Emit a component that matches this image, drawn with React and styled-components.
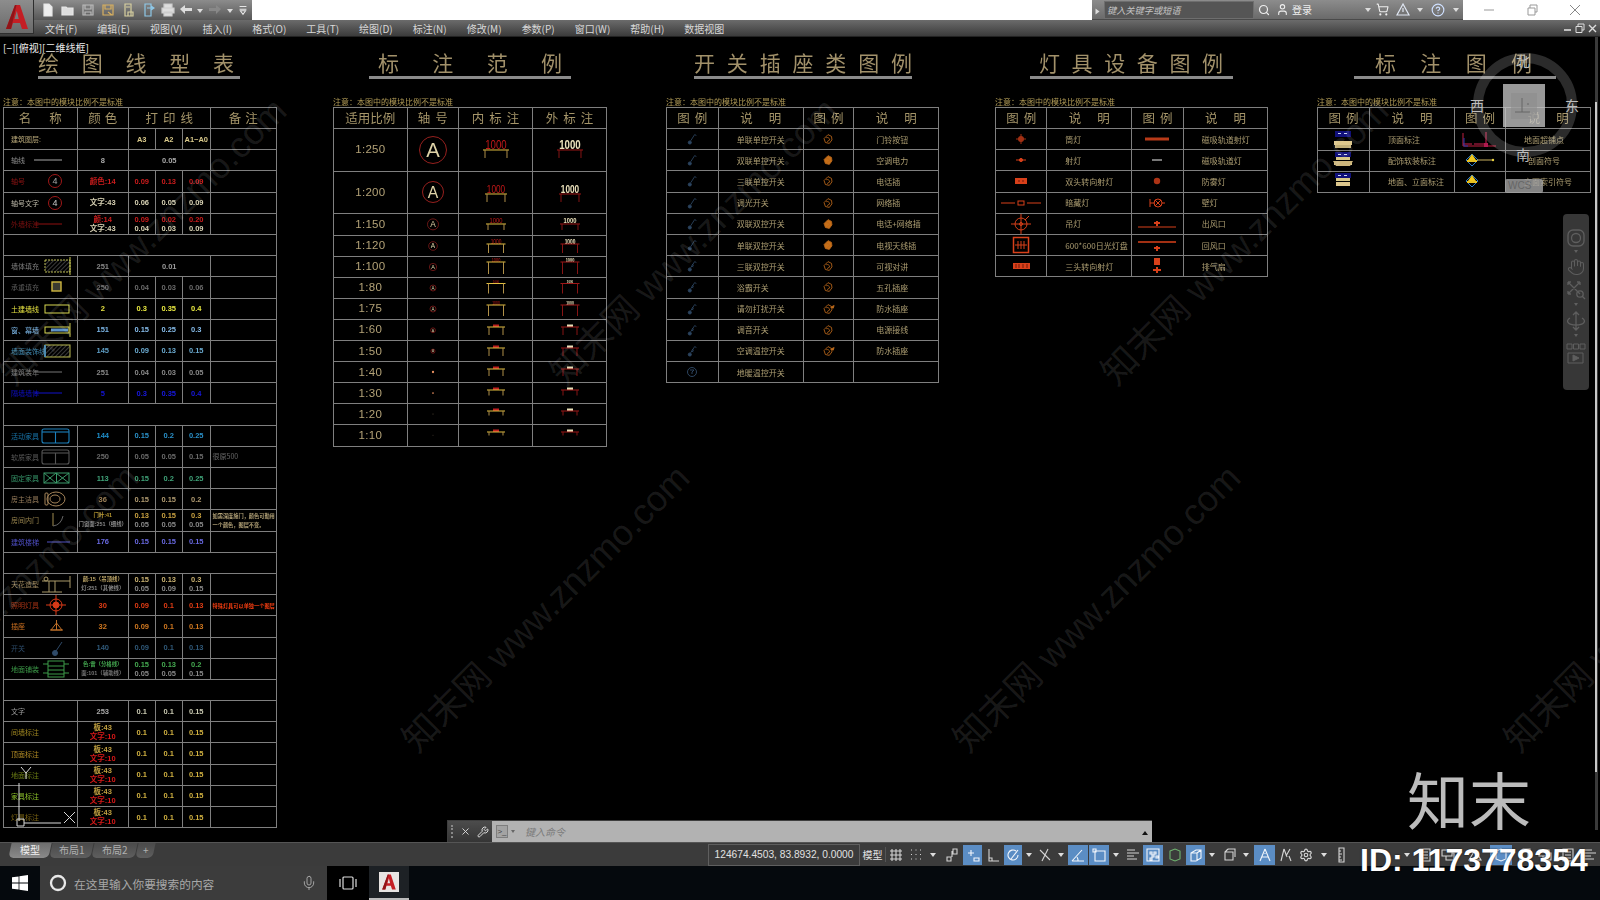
import React from "react";
import styled, { createGlobalStyle } from "styled-components";
import { Hand, Search, Mic, ShoppingCart, HelpCircle, User, Wrench, X as XIcon, Settings } from "lucide-react";

const CJK = '"Noto Sans CJK SC", "Liberation Sans", sans-serif';
const LAT = '"Liberation Sans", "Noto Sans CJK SC", sans-serif';
const TAN = "#b3a277";
const LINE = "#7f7f7f";

const Global = createGlobalStyle`
  html, body { margin: 0; padding: 0; width: 1600px; height: 900px; overflow: hidden; background: #000; }
  #root { width: 1600px; height: 900px; }
  * { box-sizing: border-box; }
`;

const Frame = styled.div`display: flex; flex-direction: column; width: 1600px; height: 900px; font-family: ${CJK}; position: relative;`;

/* ---------- title bar ---------- */
const TitleBar = styled.div`display: flex; height: 20px; background: #fff; flex: none;`;
const AppButton = styled.div`
  position: absolute; left: 0; top: 0; width: 34px; height: 34px; z-index: 5;
  background: linear-gradient(#8d8d8d, #6a6a6a); border-right: 1px solid #2e2e2e; border-bottom: 1px solid #2e2e2e;
  display: flex; align-items: center; justify-content: center;
`;
const Qat = styled.div`
  width: 252px; height: 20px; padding-left: 38px; display: flex; align-items: center;
  background: linear-gradient(#8c8c8c, #565656);
`;
const QatSlot = styled.div`width: ${p => p.$w || 20}px; height: 20px; display: flex; align-items: center; justify-content: center; flex: none;`;
const TitleSpacer = styled.div`flex: 1; background: #fff;`;
const InfoCenter = styled.div`
  width: 371px; height: 20px; display: flex; align-items: center; padding-left: 4px; color: #eee; font-size: 10px;
  background: linear-gradient(#8c8c8c, #6a6a6a); border-bottom: 1px solid #4a4a4a; flex: none;
`;
const SearchField = styled.div`
  width: 150px; height: 18px; margin-left: 2px; background: #555; border: 1px solid #6e6e6e; color: #c4c4c4; flex: none;
  font-size: 9.2px; font-style: italic; line-height: 16px; padding-left: 2px;
`;
const InfoSlot = styled.div`width: ${p => p.$w}px; flex: none; display: flex; align-items: center; justify-content: center; color: #eee;`;
const LoginText = styled.span`white-space: nowrap; flex: none;`;
const WindowButtons = styled.div`width: 137px; flex: none; display: flex; align-items: center; justify-content: space-around; padding: 0 4px; background: #fff;`;

/* ---------- menu ---------- */
const MenuBar = styled.div`
  height: 17px; flex: none; display: flex; align-items: center; gap: 20px; padding-left: 45px;
  background: linear-gradient(#6b6b6b, #3b3b3b); border-bottom: 1px solid #222; position: relative;
`;
const MenuItem = styled.span`font-size: 10px; color: #d8d8d8; white-space: nowrap;`;
const DocButtons = styled.div`margin-left: auto; display: flex; gap: 3px; padding-right: 3px; align-items: center;`;

/* ---------- canvas ---------- */
const Canvas = styled.div`flex: 1; position: relative; overflow: hidden; background: #000;`;
const Sheet = styled.div`
  display: grid; grid-template-columns: 330px 333px 329px 322px 283px; padding-left: 3px; filter: blur(0.42px);
`;
const Column = styled.div`display: flex; flex-direction: column; align-items: flex-start;`;
const Heading = styled.div`
  margin-left: ${p => p.$x}px; width: ${p => p.$w}px; margin-top: 14px; height: 25px; line-height: 22px;
  padding: 0 ${p => p.$pr}px 0 ${p => p.$pl}px; display: flex; justify-content: space-between;
  font-size: 21px; color: #a2916a;
`;
const Rule = styled.div`margin-left: ${p => p.$x}px; width: ${p => p.$w}px; height: 3px; background: #8b8b8b;`;
const Note = styled.div`margin-top: 17px; height: 11px; line-height: 11px; font-size: 8px; color: #b19b56; white-space: nowrap;`;
const Table = styled.div`
  display: grid; grid-template-columns: ${p => p.$cols}; grid-template-rows: ${p => p.$rows};
  border-top: 1px solid ${LINE}; border-left: 1px solid ${LINE};
`;
const Cell = styled.div`
  grid-column: span ${p => p.$span || 1}; border-right: 1px solid ${LINE}; border-bottom: 1px solid ${LINE};
  display: flex; flex-direction: column; align-items: center; justify-content: center; min-width: 0;
  color: ${p => p.$c || TAN}; font-size: ${p => p.$tight ? 5.4 : 7.5}px; line-height: 9px; font-family: ${LAT}; font-weight: ${p => p.$b ? 700 : 400}; white-space: nowrap;
`;
const HeadCell = styled(Cell)`
  font-size: 12.5px; font-weight: 400; color: #a59569; font-family: ${CJK}; letter-spacing: ${p => p.$ls || 0}px; padding-left: ${p => p.$ls || 0}px; line-height: 20px;
`;
const NameCell = styled.div`
  display: grid; grid-template-columns: 21px 42px; align-items: center; padding-left: 7px;
  border-right: 1px solid ${LINE}; border-bottom: 1px solid ${LINE}; overflow: visible;
`;
const NameLabel = styled.span`font-size: 7px; color: ${p => p.$c}; white-space: nowrap;`;
const Remark = styled(Cell)`align-items: flex-start; padding-left: 2px; font-size: ${p => p.$long ? 5.2 : 7}px; font-family: ${CJK}; line-height: 9px;`;
const ScaleCell = styled(Cell)`font-size: 11.5px; color: ${TAN}; letter-spacing: .3px;`;
const LegendLabel = styled(Cell)`align-items: flex-start; padding-left: ${p => p.$pad || 18}px; font-size: 8px; font-family: ${CJK}; color: #ad9e72;`;
const BlankCell = styled(Cell)`grid-column: 1 / -1;`;

/* ---------- overlays on the drawing ---------- */
const Watermark = styled.div`
  position: absolute; left: ${p => p.$x}px; top: ${p => p.$y}px; transform: rotate(-45deg); transform-origin: 0 100%;
  font-size: 36px; line-height: 40px; white-space: nowrap; color: rgba(255,255,255,.1); font-family: ${LAT}; pointer-events: none;
`;
const ViewLabel = styled.div`position: absolute; left: 3px; top: 5px; color: #eee; font-size: 10px; line-height: 12px;`;
const Ucs = styled.svg`position: absolute; left: 15px; top: 728px;`;
const CubeRing = styled.div`
  position: absolute; left: 1473px; top: 16px; width: 104px; height: 104px; border-radius: 50%;
  border: 10px solid rgba(255,255,255,.17);
`;
const CubeFace = styled.div`
  position: absolute; left: 1503px; top: 47px; width: 42px; height: 43px; background: rgba(195,195,195,.78);
  display: flex; align-items: center; justify-content: center;
`;
const CubeInner = styled.div`width: 26px; height: 26px; background: rgba(140,140,140,.55); display: flex; align-items: center; justify-content: center;`;
const Compass = styled.div`position: absolute; left: ${p => p.$x}px; top: ${p => p.$y}px; color: #bdbdbd; font-size: 14px; line-height: 16px;`;
const WcsTag = styled.div`
  position: absolute; left: 1505px; top: 142px; width: 38px; height: 14px; background: rgba(165,165,165,.8); border-radius: 2px;
  color: #666; font: 10px/14px ${LAT}; padding-left: 3px;
`;
const NavBar = styled.div`
  position: absolute; left: 1563px; top: 177px; width: 26px; height: 176px; background: #373737; border-radius: 4px;
  display: flex; flex-direction: column; align-items: center; gap: 4px; padding-top: 15px; color: #5e5e5e;
`;
const NavCaret = styled.div`width: 0; height: 0; border: 2.5px solid transparent; border-top: 3px solid #606060; margin: -1px 0;`;
const Scrollbar = styled.div`position: absolute; right: 2px; top: 0; bottom: 12px; width: 3px; background: #3a3a3a; `;
const ScrollThumb = styled.div`margin-top: 65px; height: 670px; background: #c8c8c8; width: 2px;`;
const Brand = styled.div`position: absolute; left: 1407px; top: 723px; color: #bcbcbc; font-size: 62px; line-height: 76px; white-space: nowrap;`;
const CommandLine = styled.div`
  position: absolute; left: 447px; top: 783px; width: 705px; height: 22px; display: flex; border: 1px solid #3e3e3e; border-bottom: 0; border-right: 0;
`;
const CmdTools = styled.div`width: 44px; background: linear-gradient(#4c4c4c, #353535); display: flex; align-items: center; gap: 6px; padding-left: 3px; color: #ddd; flex: none;`;
const Grip = styled.div`width: 3px; height: 13px; border-left: 2px dotted #888;`;
const CmdInput = styled.div`
  flex: 1; background: #b2b2b2; display: flex; align-items: center; padding: 0 4px 0 4px; color: #7a7a7a; font-size: 10px; font-style: italic; gap: 3px;
`;
const CmdPrompt = styled.span`width: 12px; height: 13px; border: 1px solid #7e7e7e; background: #a3a3a3; color: #444; font: 8px/11px ${LAT}; font-style: normal; text-align: center; margin-right: 0;`;
const CmdCaret = styled.span`width: 0; height: 0; border: 2.5px solid transparent; border-top: 3px solid #666; margin: 2px 7px 0 0;`;
const CmdEnd = styled.span`margin-left: auto; width: 0; height: 0; border: 3px solid transparent; border-bottom: 4px solid #111;`;

/* ---------- tab / status bar ---------- */
const StatusRow = styled.div`height: 24px; flex: none; display: flex; background: #3b3b3b; border-top: 1px solid #555; position: relative;`;
const Tabs = styled.div`width: 708px; display: flex; align-items: flex-start; padding-left: 10px; gap: 1px; flex: none;`;
const Tab = styled.div`
  width: ${p => p.$w}px; height: 15px; font-size: 10px; line-height: 14px; text-align: center; border-radius: 0 0 5px 5px; transform: skewX(-12deg);
  color: ${p => p.$on ? "#f0f0f0" : "#b0b0b0"}; background: ${p => p.$on ? "linear-gradient(#6d6d6d,#8a8a8a)" : "linear-gradient(#4a4a4a,#5e5e5e)"};
`;
const TabText = styled.span`display: inline-block; transform: skewX(12deg);`;
const Tray = styled.div`flex: 1; display: flex; align-items: center; height: 23px;`;
const Coords = styled.div`
  width: 152px; height: 22px; border: 1px solid #5f5f5f; color: #e2e2e2; font: 10.2px/20px ${LAT}; text-align: center; white-space: nowrap; flex: none;
`;
const ModelBtn = styled.div`width: 26px; color: #e2e2e2; font-size: 10px; text-align: center; flex: none; border-right: 1px solid #555;`;
const Slot = styled.div`
  width: ${p => p.$w}px; height: 20px; flex: none; display: flex; align-items: center; justify-content: center;
  background: ${p => p.$on ? "#5b8dc4" : "transparent"}; color: ${p => p.$on ? "#f2f6fb" : "#d4d4d4"};
`;
const Caret = styled.span`width: 0; height: 0; border: 3px solid transparent; border-top: 4px solid #ddd; margin-top: 4px;`;
const IdBadge = styled.div`
  position: absolute; left: 1360px; top: 843px; font: 700 32px/34px ${LAT}; color: #fff; white-space: nowrap; z-index: 6;
  text-shadow: 0 0 2px rgba(0,0,0,.7);
`;

/* ---------- task bar ---------- */
const TaskBar = styled.div`height: 34px; flex: none; display: flex; align-items: stretch; background: #05090d;`;
const StartBtn = styled.div`width: 40px; display: flex; align-items: center; justify-content: center;`;
const SearchBox = styled.div`
  width: 287px; background: #3c3c3c; display: flex; align-items: center; padding-left: 9px; gap: 7px; color: #a8a8a8; font-size: 11.7px;
`;
const MicSlot = styled.div`margin-left: auto; margin-right: 10px; display: flex; color: #aaa;`;
const TaskView = styled.div`width: 42px; background: #000; display: flex; align-items: center; justify-content: center;`;
const TaskTile = styled.div`width: 40px; background: #1d2125; border-bottom: 2px solid #bbb; display: flex; align-items: center; justify-content: center;`;
const TileBox = styled.div`width: 20px; height: 20px; background: #e8e4e2; display: flex; align-items: center; justify-content: center;`;

/* ---------- drawings ---------- */
const LogoA = ({ s = 26 }) => (
  <svg width={s} height={s} viewBox="0 0 26 26">
    <path d="M2 25 L11 1 L16 1 L24 25 L18 25 L16 19 L9 19 L7 25 Z M10.5 15 L14.8 15 L12.8 7 Z" fill="#c41e24" fillRule="evenodd" />
    <path d="M2 25 L11 1 L12.5 1 L7 25 Z" fill="#8f1418" />
  </svg>
);

const Q = ({ d, fill = "none", stroke = "#e6e6e6" }) => (
  <svg width="14" height="14" viewBox="0 0 14 14" fill={fill} stroke={stroke} strokeWidth="1.2"><path d={d} /></svg>
);

const T1Sym = {
  line: c => <line x1="2" y1="10" x2="30" y2="10" stroke={c} />,
  num: (r, n) => <g><circle cx="23" cy="10" r="6.5" fill="none" stroke="#a01818" /><text x="23" y="13" fontSize="9" textAnchor="middle" fill={n} fontFamily="Liberation Sans">4</text></g>,
  hatch: <g><rect x="13" y="4" width="25" height="12" fill="url(#h)" stroke="#b8b850" strokeDasharray="2 1" /><line x1="38" y1="1" x2="38" y2="19" stroke="#c8c850" /></g>,
  sq: <rect x="20" y="5" width="9" height="9" fill="#3a3a30" stroke="#d0b840" strokeWidth="1.4" />,
  wall: <rect x="13" y="6" width="24" height="8" fill="none" stroke="#d8d850" />,
  win: <g><rect x="13" y="7" width="24" height="6" fill="none" stroke="#d8d850" /><rect x="19" y="8.5" width="17" height="3" fill="#5b92c8" /><line x1="38" y1="3" x2="38" y2="17" stroke="#c8c850" /></g>,
  deco: <g><rect x="13" y="4" width="25" height="12" fill="url(#h)" stroke="#b8b850" /><rect x="12" y="4" width="2" height="12" fill="#4a8ab0" /></g>,
  sofa: c => <g fill="none" stroke={c} strokeWidth="1.1"><rect x="10" y="3" width="27" height="14" rx="2" /><line x1="23.5" y1="6" x2="23.5" y2="17" /><line x1="10" y1="6" x2="37" y2="6" /></g>,
  fixed: <g fill="none" stroke="#3a9a6a"><rect x="12" y="5" width="25" height="10" /><path d="M12 5l12 10M24 5L12 15M24 5l13 10M37 5L24 15M24.5 5v10" /></g>,
  wc: <g fill="none" stroke="#a5855a"><ellipse cx="24" cy="10" rx="9" ry="7" /><ellipse cx="23" cy="10" rx="5" ry="4" /><rect x="13" y="4" width="3" height="12" rx="1" /></g>,
  door: <g fill="none" stroke="#a08c50"><line x1="21" y1="3" x2="21" y2="16" /><path d="M21 16 Q29 15 31 6" stroke="#666" /></g>,
  stair: <line x1="15" y1="10" x2="38" y2="10" stroke="#5050c0" />,
  ceil: <g stroke="#a89868" fill="none"><path d="M10 7h28M17 7v11M23 7v11M10 18h20M38 2v12" /><circle cx="14" cy="5" r="2" /></g>,
  lamp: <g stroke="#d83a18" fill="none"><circle cx="24" cy="10" r="6" /><circle cx="24" cy="10" r="3" fill="#d83a18" /><path d="M14 10h20M24 0v20" /></g>,
  socket: <g stroke="#c07028" fill="none"><path d="M19 14 L24.5 7 L30 14 Z" /><line x1="18" y1="14" x2="31" y2="14" /><line x1="24.5" y1="4" x2="24.5" y2="14" /></g>,
  sw: <g stroke="#2f4a68" fill="#2f4a68"><circle cx="23" cy="15" r="2.5" /><path d="M24 13 L30 4" fill="none" /></g>,
  floor: <g stroke="#3c9a48" fill="none"><rect x="16" y="2" width="16" height="16" /><path d="M16 7h16M16 11h16M16 15h16M11 5h5M32 5h5M32 14h5M11 14h5" /></g>,
};

const Sym = ({ children }) => <svg width="42" height="20" viewBox="0 0 42 20">{children}</svg>;

const W = "#d8d2b4", R = "#cc1c1c", G = "#6a6a6a";
const rowsT1 = [
  { n: "建筑图层:", c: "#b8a878", vals: ["A3", "A2", "A1~A0"], vc: "#d8c88a" },
  { n: "轴线", c: "#8e8e8e", s: T1Sym.line("#a8a8a8"), col: "8", cc: "#aaa", span: "0.05", vc: "#a8a8a8" },
  { n: "轴号", c: "#901414", s: T1Sym.num(0, "#a8a8a8"), col: "颜色:14", cc: R, vals: ["0.09", "0.13", "0.09"], vc: R },
  { n: "轴号文字", c: "#bcb8a8", s: T1Sym.num(0, "#c8c8c8"), col: "文字:43", cc: W, vals: ["0.06", "0.05", "0.09"], vc: W },
  { n: "外墙标注", c: "#7c1010", s: T1Sym.line("#901010"), col: ["颜:14", "文字:43"], cc: [R, W], vals: [["0.09", "0.04"], ["0.02", "0.03"], ["0.20", "0.09"]], vc: [R, W] },
  {},
  { n: "墙体填充", c: "#7e7e7e", s: T1Sym.hatch, col: "251", cc: "#8a8a8a", span: "0.01", vc: "#9a9a9a" },
  { n: "承重填充", c: "#5a5a5a", s: T1Sym.sq, col: "250", cc: G, vals: ["0.04", "0.03", "0.06"], vc: G },
  { n: "土建墙线", c: "#e4e040", s: T1Sym.wall, col: "2", cc: "#e4e040", vals: ["0.3", "0.35", "0.4"], vc: "#e8e840" },
  { n: "窗、幕墙", c: "#7ab4e4", s: T1Sym.win, col: "151", cc: "#7ab4e4", vals: ["0.15", "0.25", "0.3"], vc: "#86bcea" },
  { n: "墙面装饰线", c: "#3f86ac", s: T1Sym.deco, col: "145", cc: "#5e9ec6", vals: ["0.09", "0.13", "0.15"], vc: "#6aaad0" },
  { n: "建筑装年", c: "#777", s: T1Sym.line("#777"), col: "251", cc: "#8a8a8a", vals: ["0.04", "0.03", "0.05"], vc: "#888" },
  { n: "隔墙墙体", c: "#0d0dbb", s: T1Sym.line("#1212cc"), col: "5", cc: "#1414d8", vals: ["0.3", "0.35", "0.4"], vc: "#1818e0" },
  {},
  { n: "活动家具", c: "#1876ac", s: T1Sym.sofa("#1c80bc"), col: "144", cc: "#1f8fcc", vals: ["0.15", "0.2", "0.25"], vc: "#2a90c8" },
  { n: "软质家具", c: "#5a5a5a", s: T1Sym.sofa("#555"), col: "250", cc: G, vals: ["0.05", "0.05", "0.15"], vc: G, rem: "很原500", rc: "#666" },
  { n: "固定家具", c: "#36966a", s: T1Sym.fixed, col: "113", cc: "#3fa278", vals: ["0.15", "0.2", "0.25"], vc: "#3fa278" },
  { n: "房主洁具", c: "#967c5a", s: T1Sym.wc, col: "36", cc: "#9c8058", vals: ["0.15", "0.15", "0.2"], vc: "#b09a70" },
  { n: "房间内门", c: "#96824c", s: T1Sym.door, col: ["门叶:41", "门窗面:251（细线）"], cc: ["#b89830", "#8a8a8a"], tight: true, vals: [["0.13", "0.05"], ["0.15", "0.05"], ["0.3", "0.05"]], vc: ["#c8a040", "#888"], rem: ["如需深度施门，颜色可勤用", "一个颜色，图层不变。"], rc: "#cc8f10", long: true },
  { n: "建筑楼梯", c: "#4d4dc0", s: T1Sym.stair, col: "176", cc: "#6868e0", vals: ["0.15", "0.15", "0.15"], vc: "#6868e0" },
  {},
  { n: "天花造型", c: "#a08a60", s: T1Sym.ceil, col: ["颜:15（吊顶线）", "灯:251（其他线）"], cc: ["#c0a868", "#888"], tight: true, vals: [["0.15", "0.05"], ["0.13", "0.09"], ["0.3", "0.15"]], vc: ["#c8b070", "#888"] },
  { n: "照明灯具", c: "#a43214", s: T1Sym.lamp, col: "30", cc: "#e03c14", vals: ["0.09", "0.1", "0.13"], vc: "#e03c14", rem: "特殊灯具可以单独一个图层", rc: "#f03c10", long: true },
  { n: "插座", c: "#cc7020", s: T1Sym.socket, col: "32", cc: "#d07820", vals: ["0.09", "0.1", "0.13"], vc: "#d07820" },
  { n: "开关", c: "#2c4a68", s: T1Sym.sw, col: "140", cc: "#2f5878", vals: ["0.09", "0.1", "0.13"], vc: "#2f5878" },
  { n: "地面铺装", c: "#3c9a48", s: T1Sym.floor, col: ["色:雷（分格线）", "面:101（辅助线）"], cc: ["#44a850", "#777"], tight: true, vals: [["0.15", "0.05"], ["0.13", "0.05"], ["0.2", "0.15"]], vc: ["#44a850", "#888"] },
  {},
  { n: "文字", c: "#9c9c9c", col: "253", cc: "#aaa", vals: ["0.1", "0.1", "0.15"], vc: "#c8c8b0" },
  ...[["间墙标注", "#9c8420"], ["顶面标注", "#b08a24"], ["地面标注", "#6c7e14"], ["家具标注", "#8cc02a"], ["灯具标注", "#7c6414"]].map(([n, c]) => ({
    n, c, col: ["板:43", "文字:10"], cc: ["#c0a040", "#d81818"], vals: ["0.1", "0.1", "0.15"], vc: "#d0b040",
  })),
];

const Stack = ({ v, c }) => Array.isArray(v)
  ? v.map((x, i) => <span key={i} style={{ color: c[i] }}>{x}</span>)
  : <span style={{ color: c }}>{v}</span>;

const Table1 = () => (
  <Table $cols="73.5px 51.5px 26.5px 27.5px 27.5px 66.5px" $rows="21px repeat(33, 21.2px)">
    <HeadCell $ls={18}>名称</HeadCell>
    <HeadCell $ls={4}>颜色</HeadCell>
    <HeadCell $span={3} $ls={5}>打印线</HeadCell>
    <HeadCell $ls={4}>备注</HeadCell>
    {rowsT1.map((r, i) => r.n === undefined ? <BlankCell key={i} /> : (
      <React.Fragment key={i}>
        <NameCell>
          <NameLabel $c={r.c}>{r.n}</NameLabel>
          {r.s ? <Sym>{r.s}</Sym> : <span />}
        </NameCell>
        <Cell $b $tight={r.tight}>{r.col ? <Stack v={r.col} c={r.cc} /> : null}</Cell>
        {r.span
          ? <Cell $span={3} $b><Stack v={r.span} c={r.vc} /></Cell>
          : r.vals.map((v, j) => <Cell key={j} $b><Stack v={v} c={r.vc} /></Cell>)}
        <Remark $long={r.long} $b={r.long}>{r.rem ? <Stack v={r.rem} c={r.rc} /> : null}</Remark>
      </React.Fragment>
    ))}
  </Table>
);

const Axis = ({ r }) => (
  <svg width="40" height="30" viewBox="0 0 40 30">
    {r >= 3 ? <circle cx="20" cy="15" r={r} fill="none" stroke="#96201e" /> : <circle cx="20" cy="15" r={r} fill={r > 1 ? "#e89060" : "#a89070"} />}
    {r >= 3 && <text x="20" y={15 + r * 0.55} fontSize={r * 1.5} textAnchor="middle" fill="#e0d4a8" fontFamily="Liberation Sans">A</text>}
  </svg>
);

const Dim = ({ h, top, legs, w, ts, outer, num = "1000" }) => {
  const cx = 37, l = cx - w / 2, r = cx + w / 2;
  const bar = outer ? "#a01818" : "#e4c040";
  const leg = outer ? "#861414" : "#b09048";
  const txt = outer ? "#ece2bc" : "#c41818";
  return (
    <svg width="72" height={h - 1} viewBox={`0 0 72 ${h - 1}`}>
      {ts > 0 && <text x={cx} y={top - 0.5} fontSize={ts * 1.35} textAnchor="middle" fill={txt} fontFamily="Liberation Sans" fontWeight={outer ? 700 : 400} textLength={ts * 2.15} lengthAdjust="spacingAndGlyphs">{num}</text>}
      {ts === 0 && <rect x={cx - 3} y={top - 2.5} width="6" height="2.5" fill={outer ? "#e8e0b8" : "#c02020"} />}
      <line x1={l - 2} y1={top} x2={r + 2} y2={top} stroke={bar} />
      <line x1={l} y1={top} x2={l} y2={top + legs} stroke={leg} />
      <line x1={r} y1={top} x2={r} y2={top + legs} stroke={leg} />
    </svg>
  );
};

const rowsT2 = [
  ["1:250", 42.7, 13.5, 21, 8, 22, 10], ["1:200", 42.3, 10.5, 22, 8, 18, 8.5], ["1:150", 21.7, 8, 10, 6, 16, 6],
  ["1:120", 21, 6.5, 8, 9, 15, 5], ["1:100", 21, 5.5, 5, 12, 15, 4], ["1:80", 21, 4.5, 5.5, 10, 15, 3],
  ["1:75", 21, 4.5, 6, 11, 15, 3.5], ["1:60", 21.5, 3.5, 7, 8, 14, 0], ["1:50", 21.3, 3, 7, 8, 14, 0],
  ["1:40", 21, 1.7, 7, 7, 14, 0], ["1:30", 21, 1.3, 7, 5.5, 14, 0], ["1:20", 21, .6, 7, 4.5, 14, 0], ["1:10", 21.3, .5, 7, 3.5, 14, 0],
];
const Table2 = () => (
  <Table $cols="73.7px 51.3px 74px 74px" $rows={"21px " + rowsT2.map(r => r[1] + "px").join(" ")}>
    <HeadCell>适用比例</HeadCell>
    <HeadCell $ls={5}>轴号</HeadCell>
    <HeadCell $ls={5}>内标注</HeadCell>
    <HeadCell $ls={5}>外标注</HeadCell>
    {rowsT2.map(([t, h, r, top, legs, w, ts]) => (
      <React.Fragment key={t}>
        <ScaleCell>{t}</ScaleCell>
        <Cell><Axis r={r} /></Cell>
        <Cell><Dim h={h} top={top} legs={legs} w={w} ts={ts} /></Cell>
        <Cell><Dim h={h} top={top} legs={legs} w={w} ts={ts} outer /></Cell>
      </React.Fragment>
    ))}
  </Table>
);

const Switch = ({ dense }) => (
  <svg width="14" height="14" viewBox="0 0 16 16" fill="none" stroke="#2c4560" strokeWidth="1">
    <circle cx="5.5" cy="12" r="1.8" fill="#2c4560" /><path d="M6.5 10 L11 3 l2 1" />
    {dense && <path d="M8 6l2 1.5M7.5 8l2 1" />}
  </svg>
);
const Outlet = ({ fill, wing }) => (
  <svg width="14" height="14" viewBox="0 0 16 16" fill="none" stroke="#b8661a" strokeWidth="1">
    <path d="M8 3 L12 5 L12.5 9 L9.5 13 L5 12 L3.5 7.5 Z" fill={fill ? "#c66f18" : "none"} /><path d="M6 6.5 a3 3 0 0 1 4 2.5 l-3 2" />
    {wing && <path d="M11 6l4-2-1 3z" fill="#d08020" />}
  </svg>
);
const rowsT3 = [
  ["单联单控开关", "门铃按钮", {}], ["双联单控开关", "空调电力", { fill: 1 }], ["三联单控开关", "电话插", {}], ["调光开关", "网络插", {}],
  ["双联双控开关", "电话+网络插", { fill: 1 }], ["单联双控开关", "电视天线插", { fill: 1 }], ["三联双控开关", "可视对讲", {}], ["浴霸开关", "五孔插座", {}],
  ["请勿打扰开关", "防水插座", { wing: 1 }], ["调音开关", "电源接线", {}], ["空调温控开关", "防水插座", { wing: 1 }],
];
const LegendHead = () => (
  <>
    <HeadCell $ls={5}>图例</HeadCell>
    <HeadCell $ls={16}>说明</HeadCell>
    <HeadCell $ls={5}>图例</HeadCell>
    <HeadCell $ls={16}>说明</HeadCell>
  </>
);
const Table3 = () => (
  <Table $cols="51.7px 85px 50.6px 85px" $rows="21px repeat(12, 21.2px)">
    <LegendHead />
    {rowsT3.map(([a, b, o], i) => (
      <React.Fragment key={i}>
        <Cell><Switch dense={i > 5} /></Cell>
        <LegendLabel>{a}</LegendLabel>
        <Cell><Outlet {...o} /></Cell>
        <LegendLabel $pad={22}>{b}</LegendLabel>
      </React.Fragment>
    ))}
    <Cell>
      <svg width="14" height="14" viewBox="0 0 14 14" fill="none" stroke="#2d4560"><circle cx="7" cy="7" r="4.5" /><path d="M5 5h4l-2 2v2" /></svg>
    </Cell>
    <LegendLabel>地暖温控开关</LegendLabel>
    <Cell />
    <Cell />
  </Table>
);

const OR = "#d8401a";
const Lamp = ({ k }) => {
  const map = {
    down: <g fill={OR} opacity=".75"><circle cx="20" cy="10" r="3" /><path d="M20 5v10M15 10h10" stroke={OR} /></g>,
    spot: <g stroke={OR} fill={OR}><path d="M15 10h10" /><circle cx="20" cy="10" r="1.6" /></g>,
    dbl: <g><rect x="14" y="7" width="12" height="6" fill={OR} /><path d="M17 10h2M21 10h2" stroke="#701808" /></g>,
    hide: <g stroke={OR}><path d="M0 10h14M26 10h14" strokeWidth="1.1" /><rect x="17" y="8" width="6" height="4" fill="none" /></g>,
    hang: <g stroke={OR} fill="none"><circle cx="20" cy="10" r="6" /><circle cx="20" cy="10" r="1.5" /><path d="M10 10h20M20 0v20M24 6l4-4" /></g>,
    panel: <g stroke={OR} fill="none"><rect x="12.5" y="2.5" width="15" height="15" strokeWidth="1.5" /><path d="M14 10h12M17 6v8M20 6v8M23 6v8" /></g>,
    tri: <g><rect x="12" y="7" width="17" height="6" fill={OR} /><path d="M15 8v4M18 8v4M22 8v4M26 8v4" stroke="#701808" /></g>,
    track1: <g><rect x="8" y="8.5" width="24" height="3" fill="#b83a18" /></g>,
    track2: <g><rect x="15" y="9" width="10" height="2" fill="#777" /></g>,
    fog: <g fill={OR} opacity=".8"><circle cx="20" cy="10" r="3.2" /></g>,
    wall: <g stroke={OR} fill="none"><path d="M13 6v8M13 10h5" /><circle cx="21" cy="10" r="4" /><path d="M18 7l6 6M24 7l-6 6M25 10h3" /></g>,
    supply: <g stroke={OR}><path d="M1 13h38" /><path d="M17 9h6M20 7v5" fill="none" strokeWidth="2" /></g>,
    ret: <g stroke={OR}><path d="M1 7h38" strokeWidth="1.4" /><path d="M17 13h6M20 11v5" fill="none" strokeWidth="2" /></g>,
    exh: <g fill={OR}><rect x="17" y="2" width="6" height="7" /><path d="M16 14h8M20 11v6" stroke={OR} strokeWidth="2" /></g>,
  };
  return <svg width="42" height="20" viewBox="0 0 40 20">{map[k]}</svg>;
};
const rowsT4 = [
  ["down", "筒灯", "track1", "磁吸轨道射灯"], ["spot", "射灯", "track2", "磁吸轨道灯"], ["dbl", "双头转向射灯", "fog", "防雾灯"],
  ["hide", "暗藏灯", "wall", "壁灯"], ["hang", "吊灯", "supply", "出风口"], ["panel", "600*600日光灯盘", "ret", "回风口"], ["tri", "三头转向射灯", "exh", "排气扇"],
];
const Table4 = () => (
  <Table $cols="51.3px 85px 51.4px 84.6px" $rows="21px repeat(7, 21.2px)">
    <LegendHead />
    {rowsT4.map(([a, b, c, d], i) => (
      <React.Fragment key={i}>
        <Cell><Lamp k={a} /></Cell>
        <LegendLabel>{b}</LegendLabel>
        <Cell><Lamp k={c} /></Cell>
        <LegendLabel>{d}</LegendLabel>
      </React.Fragment>
    ))}
  </Table>
);

const DimBlock = ({ n }) => (
  <svg width="26" height="19" viewBox="0 0 26 19">
    <rect x="4" y="1" width="16" height={n > 1 ? 5 : 6} fill="#10107a" />
    {n > 1 && <rect x="5" y="6" width="14" height="3" fill="#d8c888" />}
    <rect x={n === 3 ? 5 : 3} y={n === 1 ? 11 : 10} width={n === 3 ? 14 : 18} height={4} fill="#dcc68c" />
    {n === 1 && <rect x="4" y="15" width="16" height="3" fill="#c0ae78" />}
    {n === 2 && <path d="M2 10h20l-3 5H5z" fill="#cdb67c" />}
    <path d="M7 3.5h3M13 3.5h3" stroke="#cdd4ee" strokeWidth="1" />
  </svg>
);
const Floor = () => (
  <svg width="40" height="19" viewBox="0 0 40 19" fill="none">
    <path d="M3 3v13h33" stroke="#c02040" /><path d="M26 2v13M14 14h12M3 14h9" stroke="#d02050" /><path d="M4 8v8h4" stroke="#2a3ab0" /><rect x="24" y="13" width="4" height="4" fill="#b01a50" />
  </svg>
);
const Marker = ({ tail }) => (
  <svg width="34" height="19" viewBox="0 0 34 19" fill="none">
    <path d="M9 3l6 6-6 6-6-6z" stroke="#2a7ac8" /><path d="M5 9l4-6 4 6z" fill="#f0c820" /><rect x="4" y="9" width="10" height="2" fill="#e8c020" />
    {tail && <path d="M14 9h16" stroke="#c8b060" />}
    {tail && <circle cx="30" cy="9" r="1.2" fill="#e8d040" />}
  </svg>
);
const Table5 = () => (
  <Table $cols="52px 85px 51px 85.4px" $rows="21px 21.7px 21px 21.5px">
    <LegendHead />
    <Cell><DimBlock n={1} /></Cell><LegendLabel>顶面标注</LegendLabel><Cell><Floor /></Cell><LegendLabel>地面超铺点</LegendLabel>
    <Cell><DimBlock n={2} /></Cell><LegendLabel>配饰软装标注</LegendLabel><Cell><Marker tail /></Cell><LegendLabel $pad={22}>剖面符号</LegendLabel>
    <Cell><DimBlock n={3} /></Cell><LegendLabel>地面、立面标注</LegendLabel><Cell><Marker /></Cell><LegendLabel>立面索引符号</LegendLabel>
  </Table>
);

const Title = ({ x, w, pl = 0, pr = 0, text }) => (
  <>
    <Heading $x={x} $w={w} $pl={pl} $pr={pr}>{[...text].map((t, i) => <span key={i}>{t}</span>)}</Heading>
    <Rule $x={x} $w={w} />
  </>
);

/* ---------- status bar icons ---------- */
const paths = {
  grid: "M4 2v12M8 2v12M12 2v12M2 4h12M2 8h12M2 12h12",
  dots: "M3 3h1M7.5 3h1M12 3h1M3 7.5h1M7.5 7.5h1M12 7.5h1M3 12h1M7.5 12h1M12 12h1",
  infer: "M9 2h4v5H9zM3 10h4v4H3z M8 4v6",
  snap: "M3 6h6M6 3v6M9 11h5v3H9z",
  ortho: "M4 2v12h10M4 11h3v3",
  polar: "M13 8a5 5 0 1 1-2-4M6 12L13 3",
  track: "M3 3l10 10M11 2L5 14",
  angle: "M2 14L12 3M2 14h12M8 14a6 6 0 0 0-1-4",
  box: "M4 4h10v10H4zM2 2h3v3H2z",
  lines: "M2 3h8M2 6h12M2 9h7M2 12h10",
  transp: "M2 2h12v12H2zM5 5h2v2H5zM9 5h2v2H9zM7 8h2v2H7zM5 11h2v2H5zM11 9h2v2h-2z",
  cube: "M3 6l5-3h5v8l-5 3H3zM8 3v0M3 6h6v8M9 6l4-3",
  three: "M4 5h8v8H4zM7 2h7v8M4 5l3-3",
  annoA: "M8 2L3 14M8 2l5 12M5 10h6M8 6v1",
  annoB: "M6 2L3 14M6 2l3 8M12 2L8 9M11 9l2 5",
  ruler: "M5 1h5v14H5zM5 4h2M5 7h3M5 10h2M5 13h3",
  list: "M3 2h10v12H3zM5 5h6M5 8h6M5 11h6",
  win: "M2 3h10v6H2zM6 9v4h8V6h-2",
  tri: "M8 3l6 10H2z",
  iso: "M3 4l5-2 5 2v8l-5 2-5-2z",
};
const SI = ({ k, c }) => (
  <svg width="16" height="16" viewBox="0 0 16 16" fill="none" stroke={c || "currentColor"} strokeWidth="1.1"><path d={paths[k]} /></svg>
);
const trayItems = [
  [20, "grid"], [20, "dots"], [13, "^"], [2], [22, "infer"], [19, "snap", 1], [22, "ortho"], [18, "polar", 1], [14, "^"], [18, "track"], [14, "^"],
  [20, "angle", 1], [1], [20, "box", 1], [13, "^"], [21, "lines"], [20, "transp", 1], [23, "iso", 0, "#6fb46f"], [19, "cube", 1], [14, "^"], [19, "three"], [16, "^"],
  [21, "annoA", 1], [21, "annoB"], [20, "gear"], [15, "^"], [22, "ruler"], [47], [13, "^"], [23, "list"], [24, "win"], [30, "tri"], [22, "iso", 1], [23, "three"], [20, "win"], [25, "list"], [20, "lines"],
];

export default function App() {
  return (
    <Frame>
      <Global />
      <AppButton><LogoA /></AppButton>
      <TitleBar>
        <Qat>
          <QatSlot><Q d="M3 1h5l3 3v9H3z" fill="#eee" /></QatSlot>
          <QatSlot><Q d="M1 4h4l1 1h6v7H1z" fill="#ddd" /></QatSlot>
          <QatSlot><Q d="M2 2h10v10H2zM4 2v4h6V2M4 12V9h6v3" stroke="#bbb" /></QatSlot>
          <QatSlot><Q d="M2 2h10v10H2zM4 2v4h6V2M7 9l4 3" stroke="#d8b060" /></QatSlot>
          <QatSlot><Q d="M4 1h6v12H4zM5 4h4M7 9h5v4H7z" stroke="#d8d0a0" /></QatSlot>
          <QatSlot><Q d="M4 1h6v12H4zM6 5h7M10 3l3 2-3 2" stroke="#8ec8e8" /></QatSlot>
          <QatSlot><Q d="M3 5V1h8v4M1 5h12v5H1zM3 9h8v4H3z" fill="#ddd" stroke="#ccc" /></QatSlot>
          <QatSlot $w={15}><Q d="M1 6l5-4v3h7v3H6v3z" fill="#ddd" stroke="none" /></QatSlot>
          <QatSlot $w={14}><Caret /></QatSlot>
          <QatSlot $w={16}><Q d="M13 6L8 2v3H1v3h7v3z" fill="#888" stroke="none" /></QatSlot>
          <QatSlot $w={14}><Caret /></QatSlot>
          <QatSlot $w={12}><Q d="M3 3h8M3 6h8M4 8l3 4 3-4z" /></QatSlot>
        </Qat>
        <TitleSpacer />
        <InfoCenter>
          <Caret style={{ transform: "rotate(-90deg)" }} />
          <SearchField>键入关键字或短语</SearchField>
          <InfoSlot $w={19}><Search size={12} strokeWidth={2.4} /></InfoSlot>
          <InfoSlot $w={19}><User size={13} /></InfoSlot>
          <LoginText>登录</LoginText>
          <InfoSlot $w={60}><Caret style={{ marginLeft: 52 }} /></InfoSlot>
          <InfoSlot $w={20}><ShoppingCart size={13} /></InfoSlot>
          <InfoSlot $w={22}><Q d="M7 1L1 12h12zM7 5v4" stroke="#dfe6f2" /></InfoSlot>
          <InfoSlot $w={12}><Caret /></InfoSlot>
          <InfoSlot $w={24}><HelpCircle size={14} color="#cfe0ff" /></InfoSlot>
          <InfoSlot $w={12}><Caret /></InfoSlot>
        </InfoCenter>
        <WindowButtons>
          <svg width="12" height="10" viewBox="0 0 12 10"><path d="M1 5h10" stroke="#999" /></svg>
          <svg width="12" height="12" viewBox="0 0 12 12" fill="none" stroke="#999"><path d="M2 4h7v7H2zM4 4V1h7v7H9" /></svg>
          <svg width="12" height="12" viewBox="0 0 12 12" stroke="#888"><path d="M1 1l10 10M11 1L1 11" /></svg>
        </WindowButtons>
      </TitleBar>

      <MenuBar>
        {["文件(F)", "编辑(E)", "视图(V)", "插入(I)", "格式(O)", "工具(T)", "绘图(D)", "标注(N)", "修改(M)", "参数(P)", "窗口(W)", "帮助(H)", "数据视图"].map(m => <MenuItem key={m}>{m}</MenuItem>)}
        <DocButtons>
          <svg width="9" height="10" viewBox="0 0 9 10"><path d="M1 7h7" stroke="#ddd" strokeWidth="1.6" /></svg>
          <svg width="10" height="11" viewBox="0 0 10 11" fill="none" stroke="#ddd"><path d="M1 3.5h6v6H1zM3 3V1h6v6H7" /></svg>
          <svg width="9" height="9" viewBox="0 0 9 9" stroke="#ddd" strokeWidth="1.4"><path d="M1 1l7 7M8 1L1 8" /></svg>
        </DocButtons>
      </MenuBar>

      <Canvas>
        <Sheet>
          <svg width="0" height="0" style={{ position: "absolute" }}>
            <defs>
              <pattern id="h" width="3" height="3" patternUnits="userSpaceOnUse" patternTransform="rotate(45)">
                <line x1="0" y1="0" x2="0" y2="3" stroke="#777" />
              </pattern>
            </defs>
          </svg>
          <Column>
            <Title x={35} w={202} pr={6} text="绘图线型表" />
            <Note>注意：本图中的模块比例不是标准</Note>
            <Table1 />
          </Column>
          <Column>
            <Title x={36} w={202} pl={9} pr={9} text="标注范例" />
            <Note>注意：本图中的模块比例不是标准</Note>
            <Table2 />
          </Column>
          <Column>
            <Title x={28} w={218} text="开关插座类图例" />
            <Note>注意：本图中的模块比例不是标准</Note>
            <Table3 />
          </Column>
          <Column>
            <Title x={35} w={203} pl={9} pr={10} text="灯具设备图例" />
            <Note>注意：本图中的模块比例不是标准</Note>
            <Table4 />
          </Column>
          <Column>
            <Title x={37} w={202} pl={21} pr={24} text="标注图例" />
            <Note>注意：本图中的模块比例不是标准</Note>
            <Table5 />
          </Column>
        </Sheet>

        {[[-128, 683], [423, 683], [974, 683], [1525, 683], [20, 316], [571, 316], [1122, 316]].map(([x, y]) => (
          <Watermark key={x} $x={x} $y={y}>知末网 www.znzmo.com</Watermark>
        ))}

        <ViewLabel>[−][俯视][二维线框]</ViewLabel>
        <Ucs width="64" height="62" viewBox="0 0 64 62" fill="none" stroke="#d8d8d8">
          <path d="M4 18v38M9 58h37M2 54h7v7H2zM49 47l11 11M60 47L49 58M6 2l5 6 5-6M11 8v6" />
        </Ucs>

        <CubeRing />
        <CubeFace>
          <CubeInner>
            <svg width="20" height="20" viewBox="0 0 20 20" stroke="#666" fill="none"><path d="M8 2v14M1 16h15M13 8h2" /></svg>
          </CubeInner>
        </CubeFace>
        <Compass $x={1516} $y={15}>北</Compass>
        <Compass $x={1470} $y={60}>西</Compass>
        <Compass $x={1565} $y={60}>东</Compass>
        <Compass $x={1516} $y={109}>南</Compass>
        <WcsTag>WCS</WcsTag>

        <NavBar>
          <svg width="18" height="18" viewBox="0 0 18 18" fill="none" stroke="currentColor" strokeWidth="1.3"><rect x="1" y="1" width="16" height="16" rx="5" /><circle cx="9" cy="9" r="4.5" /></svg>
          <NavCaret />
          <Hand size={18} strokeWidth={1.4} />
          <svg width="20" height="20" viewBox="0 0 20 20" fill="none" stroke="currentColor" strokeWidth="1.3"><path d="M2 2l12 12M14 2L2 14M2 2h3M2 2v3M14 2h-3M14 2v3M2 14h3M2 14v-3" /><circle cx="14" cy="14" r="3.2" /><path d="M16 16l3 3" /></svg>
          <NavCaret />
          <svg width="20" height="20" viewBox="0 0 20 20" fill="none" stroke="currentColor" strokeWidth="1.3"><path d="M10 1v18M7 4l3-3 3 3M7 16l3 3 3-3M4 7c-5 3-2 7 6 7s11-4 6-7" /></svg>
          <NavCaret />
          <svg width="20" height="28" viewBox="0 0 20 28" fill="none" stroke="currentColor"><path d="M1 2h5v5H1zM7.5 2h5v5h-5zM14 2h5v5h-5zM2 11h15v10H2z" /><path d="M7 13l6 3-6 3z" fill="currentColor" /></svg>
        </NavBar>
        <Scrollbar><ScrollThumb /></Scrollbar>
        <Brand>知末</Brand>

        <CommandLine>
          <CmdTools>
            <Grip />
            <XIcon size={11} />
            <Wrench size={12} />
          </CmdTools>
          <CmdInput>
            <CmdPrompt>&gt;_</CmdPrompt>
            <CmdCaret />
            键入命令
            <CmdEnd />
          </CmdInput>
        </CommandLine>
      </Canvas>

      <StatusRow>
        <Tabs>
          <Tab $w={40} $on><TabText>模型</TabText></Tab>
          <Tab $w={41}><TabText>布局1</TabText></Tab>
          <Tab $w={43}><TabText>布局2</TabText></Tab>
          <Tab $w={17}><TabText>+</TabText></Tab>
        </Tabs>
        <Tray>
          <Coords>124674.4503, 83.8932, 0.0000</Coords>
          <ModelBtn>模型</ModelBtn>
          {trayItems.map(([w, k, on, c], i) => (
            <Slot key={i} $w={w} $on={on}>
              {k === "^" ? <Caret /> : k === "gear" ? <Settings size={14} /> : k ? <SI k={k} c={c} /> : null}
            </Slot>
          ))}
        </Tray>
      </StatusRow>

      <TaskBar>
        <StartBtn>
          <svg width="16" height="16" viewBox="0 0 16 16" fill="#fff"><path d="M0 2.3l6.6-.9v6.2H0zM7.4 1.3L16 0v7.6H7.4zM0 8.4h6.6v6.2L0 13.7zM7.4 8.4H16V16l-8.6-1.2z" /></svg>
        </StartBtn>
        <SearchBox>
          <svg width="18" height="18" viewBox="0 0 18 18" fill="none" stroke="#e8e8e8" strokeWidth="2.3"><circle cx="9" cy="9" r="7" /></svg>
          在这里输入你要搜索的内容
          <MicSlot><Mic size={16} strokeWidth={1.4} /></MicSlot>
        </SearchBox>
        <TaskView>
          <svg width="18" height="16" viewBox="0 0 18 16" fill="none" stroke="#ddd" strokeWidth="1.2"><rect x="4" y="2" width="10" height="12" rx="1" /><path d="M1 4v8M17 4v8" /></svg>
        </TaskView>
        <TaskTile>
          <TileBox><LogoA s={16} /></TileBox>
        </TaskTile>
      </TaskBar>
      <IdBadge>ID: 1173778354</IdBadge>
    </Frame>
  );
}
